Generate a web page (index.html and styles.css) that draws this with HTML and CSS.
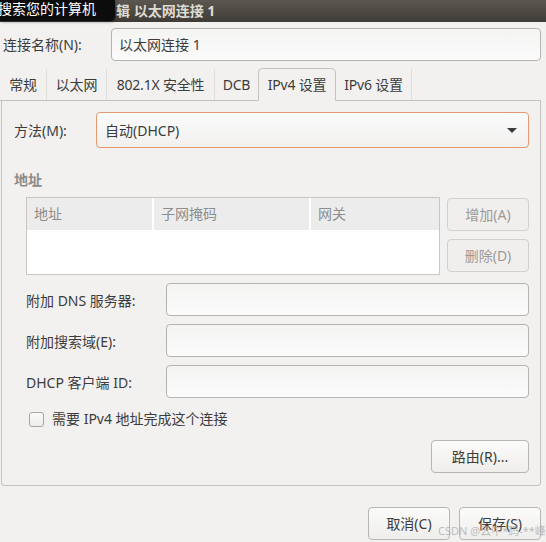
FILE: index.html
```html
<!DOCTYPE html>
<html lang="zh-CN">
<head>
<meta charset="utf-8">
<title>编辑 以太网连接 1</title>
<link rel="stylesheet" href="styles.css">
</head>
<body>
<div class="window">
  <div class="titlebar"><span class="title">辑 以太网连接 1</span></div>
  <div class="tooltip">搜索您的计算机</div>

  <div class="name-row">
    <span class="name-label">连接名称(N):</span>
    <div class="entry name-entry">以太网连接 1</div>
  </div>

  <div class="tabs">
    <div class="tab t-general">常规</div>
    <div class="tab t-eth">以太网</div>
    <div class="tab t-sec">802.1X 安全性</div>
    <div class="tab t-dcb">DCB</div>
    <div class="tab t-v4 active">IPv4 设置</div>
    <div class="tab t-v6">IPv6 设置</div>
  </div>

  <div class="panel">
    <div class="method-row">
      <span class="method-label">方法(M):</span>
      <div class="combo">
        <span>自动(DHCP)</span>
        <svg class="arrow" width="10" height="5" viewBox="0 0 10 5"><path d="M0 0H10L5 5Z" fill="#3c3c3c"/></svg>
      </div>
    </div>

    <div class="section-title">地址</div>

    <div class="address-area">
      <div class="table">
        <div class="thead">
          <div class="th c1">地址</div>
          <div class="th c2">子网掩码</div>
          <div class="th c3">网关</div>
        </div>
      </div>
      <div class="side-buttons">
        <div class="btn disabled">增加(A)</div>
        <div class="btn disabled">删除(D)</div>
      </div>
    </div>

    <div class="fields">
      <div class="field-row"><span class="field-label">附加 DNS 服务器:</span><div class="entry field-entry"></div></div>
      <div class="field-row"><span class="field-label">附加搜索域(E):</span><div class="entry field-entry"></div></div>
      <div class="field-row"><span class="field-label">DHCP 客户端 ID:</span><div class="entry field-entry"></div></div>
    </div>

    <div class="check-row">
      <span class="checkbox"></span>
      <span>需要 IPv4 地址完成这个连接</span>
    </div>

    <div class="route-row">
      <div class="btn route-btn">路由(R)...</div>
    </div>
  </div>

  <div class="actions">
    <div class="btn action-btn">取消(C)</div>
    <div class="btn action-btn">保存(S)</div>
  </div>

  <div class="watermark">CSDN @云中*码-**峰</div>
</div>
</body>
</html>
```

FILE: styles.css
```css
* { box-sizing: border-box; }

html, body {
  margin: 0;
  padding: 0;
  background: #f2f1f0;
}

body {
  font-family: "Noto Sans", "Noto Sans CJK SC", sans-serif;
  font-size: 14px;
  color: #3c3c3c;
  line-height: 20px;
}

.window {
  position: relative;
  width: 546px;
  height: 542px;
  overflow: hidden;
}

.titlebar {
  height: 22px;
  background: linear-gradient(#5b5750, #3f3c37);
  padding-left: 116px;
  display: flex;
  align-items: center;
}

.title {
  color: #dfdbd2;
  font-weight: bold;
  font-size: 14px;
}

.tooltip {
  position: absolute;
  left: 0;
  top: 0;
  width: 115px;
  height: 21px;
  background: #0c0c0c;
  color: #ffffff;
  font-size: 14px;
  line-height: 18px;
  border-bottom-right-radius: 5px;
  white-space: nowrap;
  overflow: hidden;
  box-shadow: 1px 1px 3px rgba(0,0,0,0.4);
  text-indent: -2px;
}

.name-row {
  display: flex;
  align-items: center;
  margin-top: 6px;
  padding-left: 3px;
  padding-right: 5px;
}

.name-label {
  width: 108px;
}

.entry {
  border: 1px solid #b5b3af;
  border-radius: 4px;
  background: linear-gradient(#f4f4f3, #fbfbfb);
  height: 33px;
}

.name-entry {
  flex: 1;
  padding-left: 7px;
  display: flex;
  align-items: center;
}

.tabs {
  display: flex;
  align-items: flex-end;
  margin-top: 7px;
  height: 33px;
  margin-right: 5px;
  border-bottom: 1px solid #c4c2bd;
  position: relative;
  z-index: 1;
}

.tab {
  height: 31px;
  display: flex;
  align-items: center;
  justify-content: center;
  border-right: 1px solid #e0dedb;
  white-space: nowrap;
  letter-spacing: -0.2px;
}

.t-general { width: 47px; }
.t-eth { width: 60px; }
.t-sec { width: 108px; }
.t-dcb { width: 44px; }
.t-v4 { width: 78px; }
.t-v6 { width: 76px; }

.tab.active {
  height: 33px;
  border: 1px solid #c4c2bd;
  border-bottom: 1px solid #f2f1f0;
  border-radius: 5px 5px 0 0;
  margin-bottom: -1px;
  margin-left: -1px;
  background: #f2f1f0;
  padding-top: 1px;
}

.panel {
  margin-left: 1px;
  margin-right: 5px;
  margin-top: -1px;
  border: 1px solid #c4c2bd;
  border-top: none;
  border-radius: 0 0 4px 4px;
  padding: 12px 11px 12px 12px;
  height: 386px;
}

.method-row {
  display: flex;
  align-items: center;
}

.method-label {
  width: 82px;
  padding-top: 2px;
}

.combo {
  flex: 1;
  height: 36px;
  border: 1px solid #e49a71;
  border-radius: 4px;
  background: linear-gradient(#fbfbfb, #f1f0ef);
  display: flex;
  align-items: center;
  justify-content: space-between;
  padding: 1px 11px 0 8px;
}

.section-title {
  margin-top: 22px;
  font-weight: bold;
  color: #8c8b89;
}

.address-area {
  display: flex;
  margin-top: 7px;
  margin-left: 12px;
}

.table {
  width: 415px;
  height: 78px;
  border: 1px solid #c8c6c2;
  background: #ffffff;
}

.thead {
  display: flex;
  height: 32px;
  background: #ececec;
  width: 412px;
}

.th {
  display: flex;
  align-items: center;
  padding-left: 7px;
  color: #8d8d8d;
  border-right: 2px solid #ffffff;
}

.c1 { width: 127px; }
.c2 { width: 157px; }
.c3 { flex: 1; border-right: none; }

.side-buttons {
  display: flex;
  flex-direction: column;
  gap: 8px;
  margin-left: 7px;
  padding-top: 1px;
}

.btn {
  height: 33px;
  border: 1px solid #b8b6b2;
  border-radius: 4px;
  background: linear-gradient(#fbfbfa, #efeeec);
  display: flex;
  align-items: center;
  justify-content: center;
  white-space: nowrap;
}

.btn.disabled {
  width: 82px;
  color: #9b9a98;
  border-color: #d2d0cc;
  background: #f0efed;
}

.fields {
  margin-top: 8px;
  margin-left: 12px;
  display: flex;
  flex-direction: column;
  gap: 8px;
}

.field-row {
  display: flex;
  align-items: center;
}

.field-label {
  width: 140px;
  padding-top: 2px;
}

.field-entry {
  flex: 1;
}

.check-row {
  display: flex;
  align-items: center;
  margin-top: 11px;
  margin-left: 15px;
  gap: 8px;
}

.checkbox {
  width: 15px;
  height: 15px;
  border: 1px solid #a8a6a2;
  border-radius: 3px;
  background: linear-gradient(#fafafa, #ececeb);
}

.route-row {
  display: flex;
  justify-content: flex-end;
  margin-top: 11px;
}

.route-btn {
  width: 98px;
}

.actions {
  display: flex;
  justify-content: flex-end;
  gap: 9px;
  margin-top: 21px;
  margin-right: 5px;
}

.action-btn {
  width: 82px;
}

.watermark {
  position: absolute;
  left: 438px;
  top: 521px;
  font-size: 11px;
  color: rgba(165, 165, 165, 0.7);
  white-space: nowrap;
}
```
